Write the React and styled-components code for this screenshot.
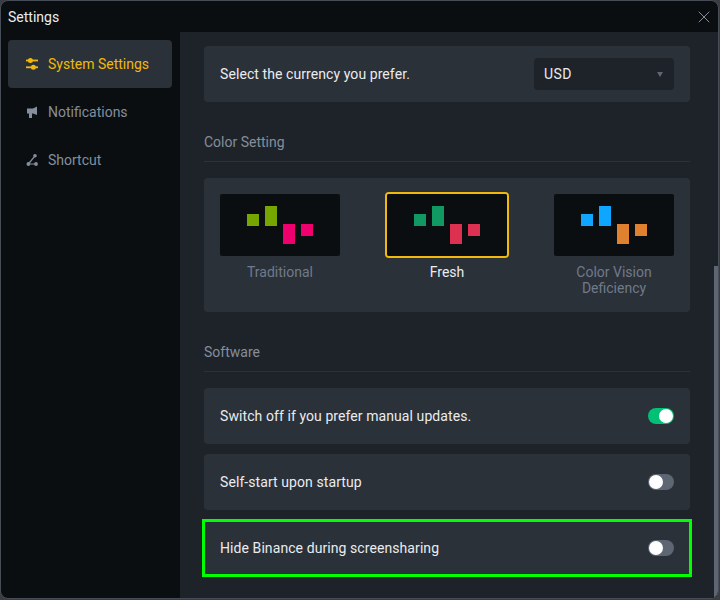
import React from "react";
import styled, { createGlobalStyle } from "styled-components";
import { X } from "lucide-react";

const GlobalStyle = createGlobalStyle`
  html, body {
    margin: 0;
    padding: 0;
    background: #3a3d42;
  }
  * {
    box-sizing: border-box;
  }
`;

const schemes = [
  { name: "Traditional", up: "#76a700", down: "#f0006f" },
  { name: "Fresh", up: "#119964", down: "#dc3150", active: true },
  { name: "Color Vision Deficiency", up: "#0fa6ff", down: "#e08130" },
];

function SlidersIcon() {
  return (
    <svg width="14" height="14" viewBox="0 0 14 14" fill="currentColor">
      <rect x="0" y="2.6" width="12" height="1.8" />
      <rect x="0" y="9.4" width="12" height="1.8" />
      <circle cx="4.4" cy="3.5" r="2.5" />
      <circle cx="7.4" cy="10.3" r="2.5" />
    </svg>
  );
}

function MegaphoneIcon() {
  return (
    <svg width="14" height="14" viewBox="0 0 14 14" fill="currentColor">
      <path d="M1 3.5H7L11 1.5V10L7 8.5H6V13H3V8.5H1Z" />
    </svg>
  );
}

function ShortcutIcon() {
  return (
    <svg width="14" height="14" viewBox="0 0 14 14" fill="currentColor">
      <circle cx="9" cy="2.8" r="1.8" />
      <circle cx="2.4" cy="11" r="1.9" />
      <circle cx="10" cy="11" r="1.9" />
      <path d="M2.4 10.4h7.6v1.2H2.4z" />
      <path d="M8.5 2.4l1 .8-6.6 8.2-1-.8z" />
    </svg>
  );
}

function Chart({ up, down }) {
  return (
    <Preview>
      <Candles>
        <Candle $h={12} $color={up} $top={8} />
        <Candle $h={20} $color={up} $top={0} />
        <Candle $h={20} $color={down} $top={18} />
        <Candle $h={12} $color={down} $top={18} />
      </Candles>
    </Preview>
  );
}

export default function App() {
  return (
    <>
      <GlobalStyle />
      <Window>
        <TitleBar>
          <Title>Settings</Title>
          <CloseButton>
            <X size={20} strokeWidth={1.2} />
          </CloseButton>
        </TitleBar>
        <Body>
          <Sidebar>
            <NavItem $active>
              <SlidersIcon />
              <span>System Settings</span>
            </NavItem>
            <NavItem>
              <MegaphoneIcon />
              <span>Notifications</span>
            </NavItem>
            <NavItem>
              <ShortcutIcon />
              <span>Shortcut</span>
            </NavItem>
          </Sidebar>
          <Content>
            <Row>
              <RowLabel>Select the currency you prefer.</RowLabel>
              <Select>
                <span>USD</span>
                <Caret />
              </Select>
            </Row>
            <SectionTitle>Color Setting</SectionTitle>
            <ColorPanel>
              {schemes.map((s) => (
                <ColorOption key={s.name}>
                  <Frame $active={s.active}>
                    <Chart up={s.up} down={s.down} />
                  </Frame>
                  <ColorName $active={s.active}>{s.name}</ColorName>
                </ColorOption>
              ))}
            </ColorPanel>
            <SectionTitle>Software</SectionTitle>
            <ToggleList>
              <Row>
                <RowLabel>Switch off if you prefer manual updates.</RowLabel>
                <Toggle $on />
              </Row>
              <Row>
                <RowLabel>Self-start upon startup</RowLabel>
                <Toggle />
              </Row>
              <HighlightRow>
                <RowLabel>Hide Binance during screensharing</RowLabel>
                <Toggle />
              </HighlightRow>
            </ToggleList>
          </Content>
          <ScrollThumb />
        </Body>
      </Window>
    </>
  );
}

const Window = styled.div`
  width: 719px;
  height: 599px;
  background: #0b0e11;
  border: 1px solid #474d57;
  border-radius: 8px;
  overflow: hidden;
  display: flex;
  flex-direction: column;
  font-family: Roboto, "Liberation Sans", sans-serif;
`;

const TitleBar = styled.div`
  height: 31px;
  flex: none;
  display: flex;
  align-items: center;
  justify-content: space-between;
  padding: 0 4px 0 7px;
`;

const Title = styled.div`
  color: #eaecef;
  font-size: 14px;
`;

const CloseButton = styled.div`
  color: #848e9c;
  display: flex;
`;

const Body = styled.div`
  flex: 1;
  min-height: 0;
  display: flex;
  position: relative;
`;

const Sidebar = styled.div`
  width: 179px;
  flex: none;
  padding: 8px 8px 0 7px;
  display: flex;
  flex-direction: column;
`;

const NavItem = styled.div`
  height: 48px;
  display: flex;
  align-items: center;
  gap: 8px;
  padding-left: 18px;
  border-radius: 4px;
  font-size: 14px;
  background: ${(p) => (p.$active ? "#2b3139" : "transparent")};
  color: ${(p) => (p.$active ? "#f0b90b" : "#848e9c")};
`;

const Content = styled.div`
  flex: 1;
  min-width: 0;
  background: #1e2329;
  padding: 14px 28px 0 24px;
  display: flex;
  flex-direction: column;
`;

const Row = styled.div`
  height: 56px;
  flex: none;
  display: flex;
  align-items: center;
  justify-content: space-between;
  background: #2b3139;
  border-radius: 4px;
  padding: 0 16px;
`;

const HighlightRow = styled(Row)`
  height: 58px;
  margin: -1px -2px 0;
  padding: 0 15px;
  border: 3px solid #00ff00;
  border-radius: 0;
`;

const RowLabel = styled.div`
  color: #eaecef;
  font-size: 14px;
  letter-spacing: 0.08px;
`;

const Select = styled.div`
  width: 140px;
  height: 32px;
  display: flex;
  align-items: center;
  justify-content: space-between;
  padding: 0 11px 0 10px;
  background: #1e2329;
  border-radius: 4px;
  color: #eaecef;
  font-size: 14px;
  letter-spacing: 0.4px;
`;

const Caret = styled.div`
  width: 0;
  height: 0;
  border-left: 3.5px solid transparent;
  border-right: 3.5px solid transparent;
  border-top: 5px solid #5e6673;
`;

const SectionTitle = styled.div`
  margin-top: 30px;
  margin-bottom: 16px;
  height: 30px;
  color: #848e9c;
  font-size: 14px;
  line-height: 20px;
  border-bottom: 1px solid #2b3139;
`;

const ColorPanel = styled.div`
  height: 134px;
  flex: none;
  background: #2b3139;
  border-radius: 4px;
  padding: 16px;
  display: flex;
  justify-content: space-between;
`;

const ColorOption = styled.div`
  width: 120px;
  display: flex;
  flex-direction: column;
  align-items: center;
`;

const Frame = styled.div`
  width: ${(p) => (p.$active ? "124px" : "120px")};
  height: ${(p) => (p.$active ? "66px" : "62px")};
  margin: ${(p) => (p.$active ? "-2px -2px" : "0")};
  border: ${(p) => (p.$active ? "2px solid #f0b90b" : "none")};
  border-radius: 4px;
  flex: none;
`;

const Preview = styled.div`
  width: 100%;
  height: 100%;
  background: #0b0e11;
  border-radius: 2px;
  display: flex;
  align-items: flex-start;
  justify-content: center;
  padding-top: 12px;
`;

const Candles = styled.div`
  display: flex;
  gap: 6px;
  align-items: flex-start;
`;

const Candle = styled.div`
  width: 12px;
  height: ${(p) => p.$h}px;
  margin-top: ${(p) => p.$top}px;
  background: ${(p) => p.$color};
`;

const ColorName = styled.div`
  margin-top: 8px;
  font-size: 14px;
  line-height: 16px;
  text-align: center;
  color: ${(p) => (p.$active ? "#eaecef" : "#707a8a")};
`;

const ToggleList = styled.div`
  display: flex;
  flex-direction: column;
  gap: 10px;
`;

const Toggle = styled.div`
  width: 26px;
  height: 16px;
  border-radius: 8px;
  flex: none;
  position: relative;
  background: ${(p) => (p.$on ? "#02c076" : "#5e6673")};
  &::after {
    content: "";
    position: absolute;
    top: 1px;
    left: ${(p) => (p.$on ? "11px" : "1px")};
    width: 14px;
    height: 14px;
    border-radius: 50%;
    background: #fff;
  }
`;

const ScrollThumb = styled.div`
  position: absolute;
  right: 0;
  top: 234px;
  bottom: 0;
  width: 4px;
  background: #5e6673;
`;
